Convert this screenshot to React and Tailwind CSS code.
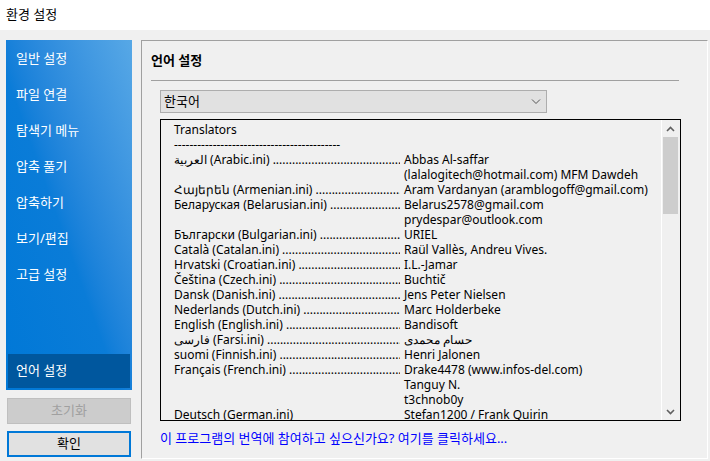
import React from "react";

const font = "font-['Noto_Sans','Noto_Sans_CJK_KR',sans-serif]";

const menu = ["일반 설정", "파일 연결", "탐색기 메뉴", "압축 풀기", "압축하기", "보기/편집", "고급 설정"];

const rows = [
    ["العربية (Arabic.ini)", "Abbas Al-saffar"],
    ["", "(lalalogitech@hotmail.com) MFM Dawdeh"],
    ["Հայերեն (Armenian.ini)", "Aram Vardanyan (aramblogoff@gmail.com)"],
    ["Беларуская (Belarusian.ini)", "Belarus2578@gmail.com"],
    ["", "prydespar@outlook.com"],
    ["Български (Bulgarian.ini)", "URIEL"],
    ["Català (Catalan.ini)", "Raül Vallès, Andreu Vives."],
    ["Hrvatski (Croatian.ini)", "I.L.-Jamar"],
    ["Čeština (Czech.ini)", "Buchtič"],
    ["Dansk (Danish.ini)", "Jens Peter Nielsen"],
    ["Nederlands (Dutch.ini)", "Marc Holderbeke"],
    ["English (English.ini)", "Bandisoft"],
    ["فارسی (Farsi.ini)", "حسام محمدی"],
    ["suomi (Finnish.ini)", "Henri Jalonen"],
    ["Français (French.ini)", "Drake4478 (www.infos-del.com)"],
    ["", "Tanguy N."],
    ["", "t3chnob0y"],
    ["Deutsch (German.ini)", "Stefan1200 / Frank Quirin", true],
];

function Row({ left, right, noDots }) {
    return (
        <div className="flex h-[15px] leading-[15px] whitespace-nowrap">
            <div className="w-[230px] shrink-0 flex overflow-hidden pr-[4px]">
                {left && <span className="shrink-0">{left}&nbsp;</span>}
                {left && !noDots && (
                    <span className="flex-1 overflow-hidden">
                        {".".repeat(120)}
                    </span>
                )}
            </div>
            <span>{right}</span>
        </div>
    );
}

export default function App() {
    return (
        <div className={`w-[710px] h-[461px] bg-[#f0f0f0] flex flex-col text-[12px] text-black ${font}`}>
            {/* title bar */}
            <div className="h-[30px] bg-white flex items-center px-[6px] text-[13px]">환경 설정</div>

            <div className="flex pt-[10px] gap-[9px] pl-[6px]">
                {/* sidebar */}
                <div className="w-[126px] flex flex-col text-[13px]">
                    <div className="h-[350px] flex flex-col pt-px bg-linear-to-bl from-[#57a8e6] via-[#0a7cd8] via-55% to-[#0078d7] text-white">
                        {menu.map((m) => (
                            <div key={m} className="h-[36px] flex items-center pl-[10px]">{m}</div>
                        ))}
                        <div className="mt-auto mx-[2px] mb-[2px] h-[34px] flex items-center pl-[8px] bg-[#00579e]">
                            언어 설정
                        </div>
                    </div>
                    <button className="mt-[8px] mx-px h-[26px] bg-[#cccccc] border border-[#bfbfbf] text-[#a0a0a0]">
                        초기화
                    </button>
                    <button className="mt-[7px] mx-px h-[26px] bg-[#e1e1e1] border-2 border-[#0078d7]">
                        확인
                    </button>
                </div>

                {/* panel */}
                <div className="w-[567px] h-[419px] border-l border-t border-[#a0a0a0] border-r border-b border-r-white border-b-white flex flex-col pl-[9px] pr-[28px]">
                    <div className="h-[39px] flex items-center font-bold pt-px text-[13px]">언어 설정</div>
                    <div className="h-px bg-[#a0a0a0]" />
                    <div className="pl-[9px] pt-[9px]">
                        <div className="w-[387px] h-[23px] bg-[#e1e1e1] border border-[#adadad] flex items-center justify-between pl-[3px] pr-[5px]">
                            <span className="text-[13px]">한국어</span>
                            <svg width="10" height="6" viewBox="0 0 10 6" fill="none" stroke="#555" strokeWidth="1">
                                <path d="M1 0.5 L5 4.5 L9 0.5" />
                            </svg>
                        </div>

                        <div className="mt-[6px] w-[521px] h-[302px] border border-black flex overflow-hidden">
                            <div className="flex-1 pl-[13px] pt-[2px] overflow-hidden">
                                <div className="h-[15px] leading-[15px]">Translators</div>
                                <div className="h-[15px] leading-[15px] whitespace-nowrap">{"-".repeat(43)}</div>
                                {rows.map(([l, r, nd], i) => (
                                    <Row key={i} left={l} right={r} noDots={nd} />
                                ))}
                            </div>
                            {/* scrollbar */}
                            <div className="w-[18px] border-l border-white flex flex-col items-center mr-px">
                                <div className="h-[17px] flex items-center justify-center">
                                    <svg width="9" height="6" viewBox="0 0 9 6" fill="none" stroke="#606060" strokeWidth="1.6">
                                        <path d="M1 5 L4.5 1.5 L8 5" />
                                    </svg>
                                </div>
                                <div className="w-[15px] h-[77px] bg-[#cdcdcd]" />
                                <div className="flex-1" />
                                <div className="h-[17px] flex items-center justify-center">
                                    <svg width="9" height="6" viewBox="0 0 9 6" fill="none" stroke="#606060" strokeWidth="1.6">
                                        <path d="M1 1 L4.5 4.5 L8 1" />
                                    </svg>
                                </div>
                            </div>
                        </div>

                        <div className="mt-[9px] text-[#0000ff] h-[18px] flex items-center text-[13px]">
                            이 프로그램의 번역에 참여하고 싶으신가요? 여기를 클릭하세요...
                        </div>
                    </div>
                </div>
            </div>
        </div>
    );
}
